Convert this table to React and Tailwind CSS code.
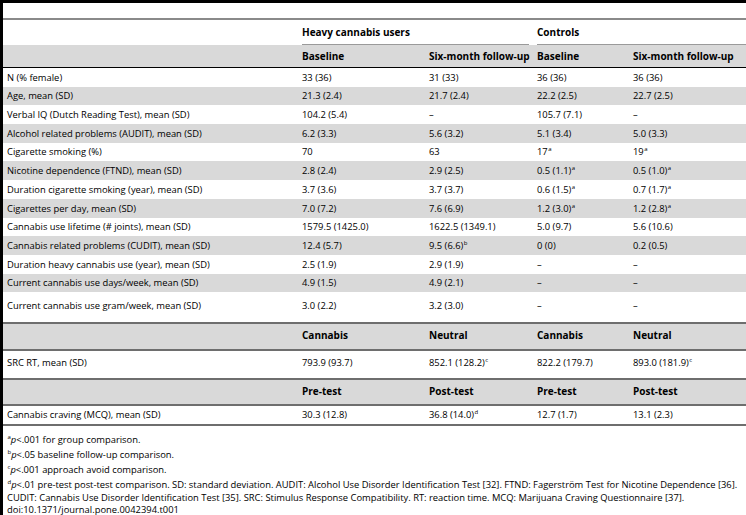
import React from "react";

const rows = [
  ["N (% female)", "33 (36)", "31 (33)", "36 (36)", "36 (36)"],
  ["Age, mean (SD)", "21.3 (2.4)", "21.7 (2.4)", "22.2 (2.5)", "22.7 (2.5)"],
  ["Verbal IQ (Dutch Reading Test), mean (SD)", "104.2 (5.4)", "–", "105.7 (7.1)", "–"],
  ["Alcohol related problems (AUDIT), mean (SD)", "6.2 (3.3)", "5.6 (3.2)", "5.1 (3.4)", "5.0 (3.3)"],
  ["Cigarette smoking (%)", "70", "63", ["17", "a"], ["19", "a"]],
  ["Nicotine dependence (FTND), mean (SD)", "2.8 (2.4)", "2.9 (2.5)", ["0.5 (1.1)", "a"], ["0.5 (1.0)", "a"]],
  ["Duration cigarette smoking (year), mean (SD)", "3.7 (3.6)", "3.7 (3.7)", ["0.6 (1.5)", "a"], ["0.7 (1.7)", "a"]],
  ["Cigarettes per day, mean (SD)", "7.0 (7.2)", "7.6 (6.9)", ["1.2 (3.0)", "a"], ["1.2 (2.8)", "a"]],
  ["Cannabis use lifetime (# joints), mean (SD)", "1579.5 (1425.0)", "1622.5 (1349.1)", "5.0 (9.7)", "5.6 (10.6)"],
  ["Cannabis related problems (CUDIT), mean (SD)", "12.4 (5.7)", ["9.5 (6.6)", "b"], "0 (0)", "0.2 (0.5)"],
  ["Duration heavy cannabis use (year), mean (SD)", "2.5 (1.9)", "2.9 (1.9)", "–", "–"],
  ["Current cannabis use days/week, mean (SD)", "4.9 (1.5)", "4.9 (2.1)", "–", "–"],
  ["Current cannabis use gram/week, mean (SD)", "3.0 (2.2)", "3.2 (3.0)", "–", "–"],
];

// row heights so that the 18.7px pitch lands on whole pixels
const heights = [
  "h-[19px] items-center",
  "h-[18px] items-center",
  "h-[19px] items-center",
  "h-[19px] items-center",
  "h-[18px] items-center",
  "h-[19px] items-center",
  "h-[19px] items-center",
  "h-[19px] items-center",
  "h-[18px] items-center",
  "h-[19px] items-center",
  "h-[19px] items-center",
  "h-[18px] items-center",
  "h-[30px] items-start pt-[9px]",
];

const cols = "grid grid-cols-[299px_127px_108px_96px_1fr]";

function Sup({ children }) {
  return <span className="text-[6px] align-top relative -top-[1px] ml-[0.5px]">{children}</span>;
}

function Cell({ v }) {
  if (Array.isArray(v)) {
    return (
      <span>
        {v[0]}
        <Sup>{v[1]}</Sup>
      </span>
    );
  }
  return <span>{v}</span>;
}

function Row({ r, grey, h }) {
  return (
    <div className={`${cols} ${h} ${grey ? "bg-[#d9d9d9]" : ""}`}>
      {r.map((v, i) => (
        <div key={i} className={`whitespace-nowrap ${i === 0 ? "pl-[4px]" : ""}`}>
          <Cell v={v} />
        </div>
      ))}
    </div>
  );
}

function HeadRow({ labels, h }) {
  return (
    <div className={`${cols} ${h} items-center pb-[3px] bg-[#d9d9d9] font-bold text-[10px] whitespace-nowrap border-y-2 border-[#6e6e6e]`}>
      <div></div>
      {labels.map((l, i) => (
        <div key={i}>{l}</div>
      ))}
    </div>
  );
}

export default function App() {
  return (
    <div
      className="w-[746px] h-[515px] overflow-hidden bg-white text-black border-l-[3px] border-t-[3px] border-black text-[9.4px] leading-none"
      style={{ fontFamily: '"Open Sans", sans-serif' }}
    >
      <div className="h-[15px]"></div>
      <div className="h-[2px] bg-[#8a8a8a]"></div>

      <div className={`${cols} h-[25px] items-end font-bold text-[10px] whitespace-nowrap`}>
        <div></div>
        <div className="col-span-2 mr-[8px] pb-[7px] border-b border-[#9a9a9a]">Heavy cannabis users</div>
        <div className="col-span-2 pb-[7px] border-b border-[#9a9a9a]">Controls</div>
      </div>

      <div className={`${cols} h-[23px] items-center bg-[#d9d9d9] font-bold text-[10px] whitespace-nowrap border-b border-black`}>
        <div></div>
        <div>Baseline</div>
        <div>Six-month follow-up</div>
        <div>Baseline</div>
        <div>Six-month follow-up</div>
      </div>

      {rows.map((r, i) => (
        <Row key={i} r={r} grey={i % 2 === 1} h={heights[i]} />
      ))}

      <HeadRow labels={["Cannabis", "Neutral", "Cannabis", "Neutral"]} h="h-[29px]" />
      <Row
        r={["SRC RT, mean (SD)", "793.9 (93.7)", ["852.1 (128.2)", "c"], "822.2 (179.7)", ["893.0 (181.9)", "c"]]}
        h="h-[27px] items-start pt-[7px]"
      />
      <HeadRow labels={["Pre-test", "Post-test", "Pre-test", "Post-test"]} h="h-[28px]" />
      <div className="border-b-2 border-[#6e6e6e]">
        <Row
          r={["Cannabis craving (MCQ), mean (SD)", "30.3 (12.8)", ["36.8 (14.0)", "d"], "12.7 (1.7)", "13.1 (2.3)"]}
          h="h-[18px] items-center"
        />
      </div>

      <div className="pl-[4px] pt-[6px] whitespace-nowrap text-[9.4px]">
        <div className="h-[15px] flex items-center">
          <span><Sup>a</Sup><i>p</i>&lt;.001 for group comparison.</span>
        </div>
        <div className="h-[15px] flex items-center">
          <span><Sup>b</Sup><i>p</i>&lt;.05 baseline follow-up comparison.</span>
        </div>
        <div className="h-[15px] flex items-center">
          <span><Sup>c</Sup><i>p</i>&lt;.001 approach avoid comparison.</span>
        </div>
        <div className="h-[15px] flex items-center">
          <span>
            <Sup>d</Sup><i>p</i>&lt;.01 pre-test post-test comparison. SD: standard deviation. AUDIT: Alcohol Use Disorder Identification Test [32]. FTND: Fagerström Test for Nicotine Dependence [36].
          </span>
        </div>
        <div className="h-[12px] flex items-center">
          CUDIT: Cannabis Use Disorder Identification Test [35]. SRC: Stimulus Response Compatibility. RT: reaction time. MCQ: Marijuana Craving Questionnaire [37].
        </div>
        <div className="h-[12px] flex items-center">doi:10.1371/journal.pone.0042394.t001</div>
      </div>
    </div>
  );
}
